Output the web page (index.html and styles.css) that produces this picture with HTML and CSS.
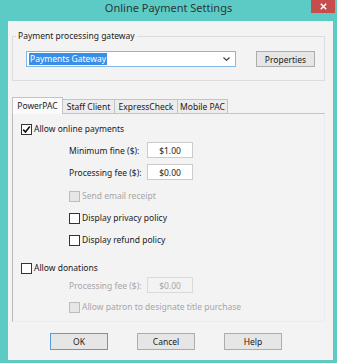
FILE: index.html
```html
<!DOCTYPE html>
<html>
<head>
<meta charset="utf-8">
<title>Online Payment Settings</title>
<link rel="stylesheet" href="styles.css">
</head>
<body>
<div class="window">
  <div class="titlebar">
    <span class="spacer"></span>
    <div class="title">Online Payment Settings</div>
    <div class="close"><svg width="7" height="7" viewBox="0 0 7 7"><path d="M0.8 0.8L6.2 6.2M6.2 0.8L0.8 6.2" stroke="#fff" stroke-width="1.5"/></svg></div>
  </div>
  <div class="client">
    <fieldset class="group">
      <legend>Payment processing gateway</legend>
      <div class="gw-row">
        <div class="combo"><span class="sel">Payments Gateway</span><svg class="chev" width="7" height="4" viewBox="0 0 7 4"><path d="M0.5 0.5L3.5 3.3L6.5 0.5" fill="none" stroke="#333" stroke-width="1.1"/></svg></div>
        <div class="btn btn-props">Properties</div>
      </div>
    </fieldset>
    <div class="tabs">
      <div class="tab active">PowerPAC</div>
      <div class="tab">Staff Client</div>
      <div class="tab">ExpressCheck</div>
      <div class="tab">Mobile PAC</div>
    </div>
    <div class="panel">
      <div class="check row-online"><span class="box"><svg width="9" height="9" viewBox="0 0 9 9"><path d="M1.2 4.6L3.5 7L7.8 1.4" fill="none" stroke="#111" stroke-width="1.6"/></svg></span>Allow online payments</div>
      <div class="field row-min"><span class="flabel">Minimum fine ($):</span><span class="input">$1.00</span></div>
      <div class="field row-fee"><span class="flabel">Processing fee ($):</span><span class="input">$0.00</span></div>
      <div class="check sub disabled row-opt"><span class="box"></span>Send email receipt</div>
      <div class="check sub row-opt"><span class="box"></span>Display privacy policy</div>
      <div class="check sub row-opt"><span class="box"></span>Display refund policy</div>
      <div class="check row-don"><span class="box"></span>Allow donations</div>
      <div class="field disabled row-dfee"><span class="flabel">Processing fee ($):</span><span class="input">$0.00</span></div>
      <div class="check sub disabled row-patron"><span class="box"></span>Allow patron to designate title purchase</div>
    </div>
    <div class="buttons">
      <div class="btn btn-dlg default">OK</div>
      <div class="btn btn-dlg">Cancel</div>
      <div class="btn btn-dlg">Help</div>
    </div>
  </div>
</div>
</body>
</html>
```
FILE: styles.css
```css
* { box-sizing: border-box; }
html, body { margin: 0; padding: 0; }
body {
  width: 337px;
  height: 363px;
  background: #5ccbc6;
  font-family: "Noto Sans", "Open Sans", sans-serif;
  font-size: 8.5px;
  color: #1a1a1a;
  overflow: hidden;
}
.window {
  width: 337px;
  height: 363px;
  background: #5ccbc6;
  display: flex;
  flex-direction: column;
}
.titlebar {
  height: 21px;
  display: grid;
  grid-template-columns: 1fr auto 1fr;
  align-items: start;
}
.title {
  font-size: 11px;
  line-height: 16px;
  color: #2a3838;
}
.close {
  justify-self: end;
  margin-right: 2px;
  width: 24px;
  height: 13px;
  background: #c74d4d;
  display: flex;
  align-items: center;
  justify-content: center;
}
.client {
  margin: 0 4px 0 8px;
  height: 339px;
  background: #f4f3f4;
  padding: 9px 8px 0 4px;
  display: flex;
  flex-direction: column;
}
.group {
  margin: 0;
  border: 1px solid #dcdcdc;
  padding: 0 3px 13px 3px;
  min-width: 0;
}
.group legend {
  padding: 0 2px;
  line-height: 12px;
}
.gw-row {
  display: flex;
  margin: 9px 0 0 10px;
}
.combo {
  width: 210px;
  height: 16px;
  border: 1px solid #86b6e6;
  background: #fff;
  display: flex;
  align-items: center;
  padding: 0 5px 0 2px;
  justify-content: space-between;
}
.sel {
  background: #3a8ee6;
  color: #fff;
  line-height: 12px;
  padding: 0 1px;
}
.btn {
  height: 16px;
  background: #e6e6e6;
  border: 1px solid #acacac;
  display: flex;
  align-items: center;
  justify-content: center;
  color: #1a1a1a;
}
.btn-props {
  width: 59px;
  margin-left: 20px;
}
.tabs {
  margin-top: 16px;
  display: flex;
  align-items: flex-end;
  border-bottom: 1px solid #c4c4c4;
  height: 17px;
}
.tab {
  height: 14px;
  line-height: 13px;
  border: 1px solid #c4c4c4;
  border-bottom: none;
  border-left: none;
  background: #ececec;
  text-align: center;
}
.tab:nth-child(2) { width: 52px; }
.tab:nth-child(3) { width: 63px; }
.tab:nth-child(4) { width: 50px; }
.tab.active {
  width: 51px;
  height: 17px;
  line-height: 15px;
  margin-bottom: -1px;
  background: #fbfbfb;
  border-left: 1px solid #c4c4c4;
}
.panel {
  height: 208px;
  border-left: 1px solid #b8b8b8;
  border-right: 1px solid #ececec;
  border-bottom: 1px solid #ececec;
  padding: 9px 0 0 8px;
  display: flex;
  flex-direction: column;
}
.check {
  height: 12px;
  display: flex;
  align-items: center;
  line-height: 12px;
}
.box {
  width: 11px;
  height: 11px;
  border: 1px solid #333;
  background: #fff;
  margin-right: 2px;
  display: flex;
  align-items: center;
  justify-content: center;
  flex: none;
}
.sub { margin-left: 48px; }
.disabled { color: #a6a6a6; }
.disabled .box {
  border-color: #bcbcbc;
  background: #e6e6e6;
}
.field {
  display: flex;
  align-items: center;
  margin-left: 48px;
  height: 16px;
}
.flabel { width: 78px; }
.input {
  width: 46px;
  height: 16px;
  background: #fff;
  border: 1px solid #cbcbcb;
  display: flex;
  align-items: center;
  justify-content: center;
}
.disabled .input {
  background: #f4f3f4;
  border-color: #dadada;
}
.row-min { margin-top: 7px; }
.row-fee { margin-top: 6px; }
.row-opt { margin-top: 10px; }
.row-don { margin-top: 16px; }
.row-dfee { margin-top: 3px; }
.row-patron { margin-top: 8px; }
.buttons {
  margin-top: 11px;
  margin-left: 38px;
  display: flex;
  gap: 29px;
}
.btn-dlg {
  width: 58px;
  height: 17px;
}
.btn-dlg.default {
  border-color: #5b9bd8;
}
```
